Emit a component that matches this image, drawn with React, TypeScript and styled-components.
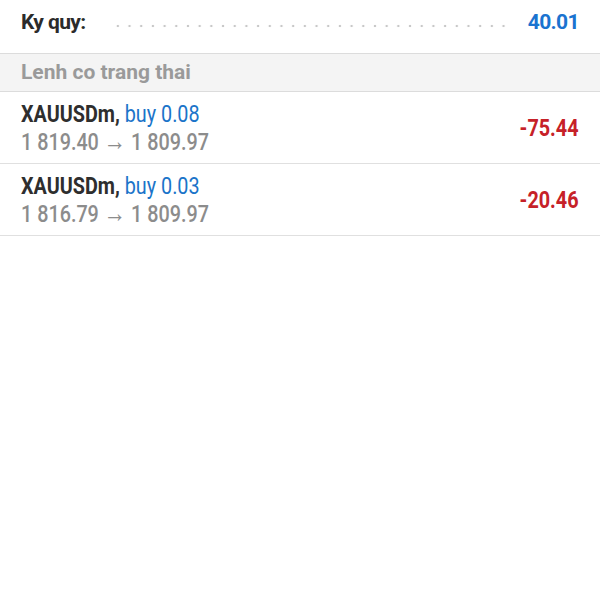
import styled, { createGlobalStyle } from 'styled-components';

const GlobalStyle = createGlobalStyle`
  html, body {
    margin: 0;
    padding: 0;
    background: #fff;
  }
  body {
    font-family: Roboto, "Liberation Sans", sans-serif;
  }
`;

const Page = styled.div`
  width: 600px;
  height: 600px;
  background: #fff;
  overflow: hidden;
`;

const SummaryRow = styled.div`
  height: 54px;
  display: flex;
  align-items: center;
  padding: 0 21px 10px;
  box-sizing: border-box;
  border-bottom: 1px solid #dcdcdc;
`;

const Label = styled.span`
  font-size: 21px;
  font-weight: 700;
  color: #2b2b2b;
  letter-spacing: -0.6px;
`;

const Leader = styled.div`
  flex: 1;
  height: 4px;
  margin: 8px 22px 0 26px;
  background-image: radial-gradient(circle, #c8c8c8 1px, transparent 1.6px);
  background-size: 11.7px 4px;
  background-repeat: repeat-x;
`;

const Value = styled.span`
  font-size: 21px;
  font-weight: 700;
  color: #1a73d0;
  letter-spacing: -0.6px;
`;

const SectionHeader = styled.div`
  height: 38px;
  display: flex;
  align-items: center;
  padding: 0 21px 1px;
  box-sizing: border-box;
  background: #f4f4f4;
  border-bottom: 1px solid #dcdcdc;
  font-size: 21px;
  font-weight: 700;
  color: #9a9a9a;
`;

const OrderRow = styled.div`
  height: 72px;
  display: flex;
  align-items: center;
  justify-content: space-between;
  padding: 0 21px;
  box-sizing: border-box;
  border-bottom: 1px solid #e0e0e0;
`;

const OrderInfo = styled.div`
  display: flex;
  flex-direction: column;
  margin-top: 3px;
`;

const Cond = styled.span<{ $origin?: 'left' | 'right' }>`
  display: inline-block;
  white-space: nowrap;
  transform: scaleX(0.86);
  transform-origin: ${({ $origin }) => $origin ?? 'left'} center;
`;

const TitleLine = styled.div`
  font-size: 23px;
  line-height: 26px;
  color: #2e2e2e;
`;

const Symbol = styled.span`
  font-weight: 700;
`;

const Side = styled.span`
  color: #1b74c9;
`;

const PriceLine = styled.div`
  font-size: 23px;
  line-height: 26px;
  color: #8c8c8c;
  font-weight: 500;
`;

const Arrow = styled.span`
  font-size: 26px;
`;

const Profit = styled.div`
  font-size: 23px;
  font-weight: 700;
  color: #c62128;
  margin-top: 2px;
`;

const orders = [
  { symbol: 'XAUUSDm', side: 'buy', volume: '0.08', open: '1 819.40', current: '1 809.97', profit: '-75.44' },
  { symbol: 'XAUUSDm', side: 'buy', volume: '0.03', open: '1 816.79', current: '1 809.97', profit: '-20.46' },
];

export default function App() {
  return (
    <Page>
      <GlobalStyle />
      <SummaryRow>
        <Label>Ky quy:</Label>
        <Leader />
        <Value>40.01</Value>
      </SummaryRow>
      <SectionHeader>Lenh co trang thai</SectionHeader>
      {orders.map((o, i) => (
        <OrderRow key={i}>
          <OrderInfo>
            <TitleLine>
              <Cond>
                <Symbol>{o.symbol},</Symbol> <Side>{o.side} {o.volume}</Side>
              </Cond>
            </TitleLine>
            <PriceLine>
              <Cond>
                {o.open} <Arrow>→</Arrow> {o.current}
              </Cond>
            </PriceLine>
          </OrderInfo>
          <Profit>
            <Cond $origin="right">{o.profit}</Cond>
          </Profit>
        </OrderRow>
      ))}
    </Page>
  );
}
